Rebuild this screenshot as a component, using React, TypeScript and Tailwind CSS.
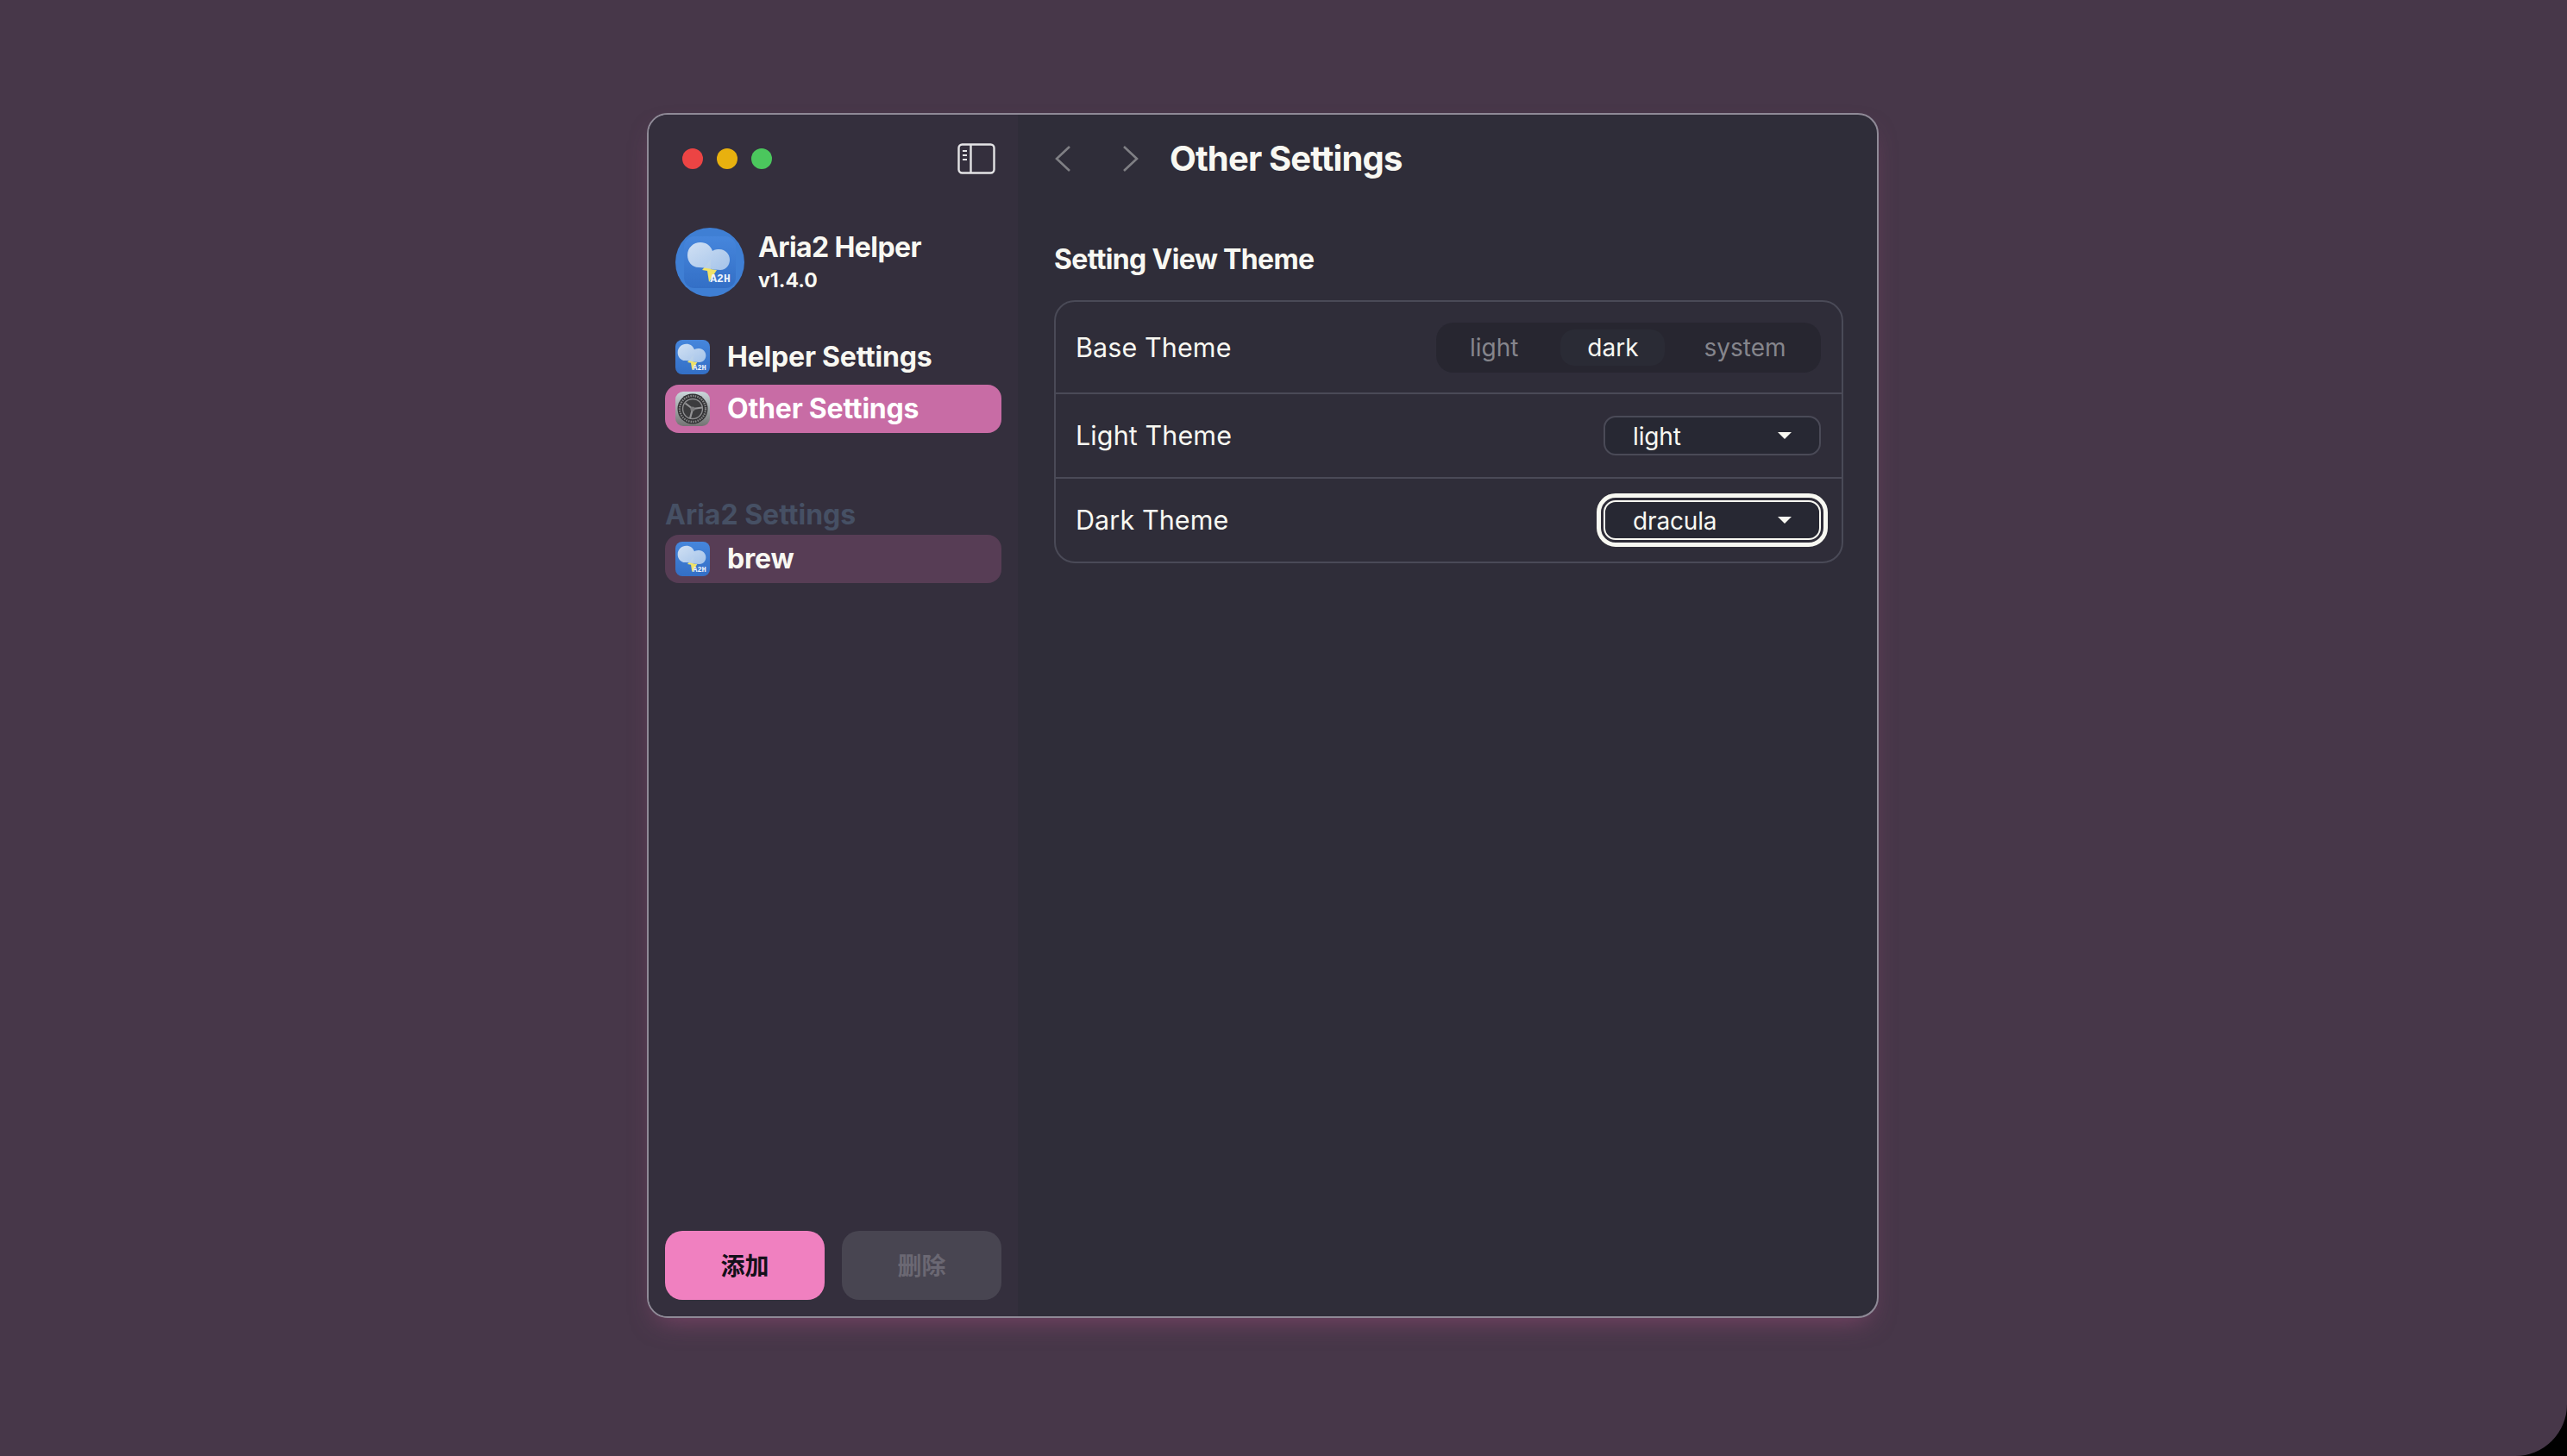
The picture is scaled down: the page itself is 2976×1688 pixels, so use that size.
import React from "react";

const FG = "text-[#f8f8f2]";

function AppGlyph({ id }: { id: string }) {
  // cloud + bolt, shared by the round logo and the nav icons
  return (
    <svg viewBox="0 0 60 60" className="w-full h-full">
      <defs>
        <linearGradient id={`bg-${id}`} x1="0" y1="0" x2="0" y2="1">
          <stop offset="0" stopColor="#4686dc" />
          <stop offset="1" stopColor="#336fc6" />
        </linearGradient>
        <linearGradient id={`cl-${id}`} x1="0" y1="0" x2="1" y2="1">
          <stop offset="0" stopColor="#d6e4f5" />
          <stop offset="1" stopColor="#a8c6ea" />
        </linearGradient>
      </defs>
      <rect width="60" height="60" rx="12" fill={`url(#bg-${id})`} />
      <path d="M31 27 L21 39 L27 40 L29 53 L38 39 L31 38 Z" fill="#f0e268" />
      <path
        d="M17 36 C9 36 4 29 4 22 C4 13 11 7 19 7 C26 7 31 11 33 17 C36 15 39 15 41 15 C48 15 53 21 53 27 C53 33 49 39 42 39 C34 39 25 36 17 36 Z"
        fill={`url(#cl-${id})`}
        fillOpacity="0.96"
      />
      <text x="42" y="53" textAnchor="middle" fontFamily="'Liberation Mono', monospace" fontWeight="700" fontSize="13" fill="#eef4fb">
        A2H
      </text>
    </svg>
  );
}

function GearIcon() {
  return (
    <svg viewBox="0 0 40 40" className="w-10 h-10">
      <defs>
        <linearGradient id="gearBg" x1="0" y1="0" x2="0" y2="1">
          <stop offset="0" stopColor="#cbd6da" />
          <stop offset="1" stopColor="#737373" />
        </linearGradient>
      </defs>
      <rect width="40" height="40" rx="9" fill="url(#gearBg)" />
      <circle cx="20" cy="20" r="17.5" fill="#303032" />
      <circle cx="20" cy="20" r="15" fill="none" stroke="#858587" strokeWidth="2.4" strokeDasharray="1.6 1.1" />
      <circle cx="20" cy="20" r="11.5" fill="#3c3c3e" stroke="#8f8f91" strokeWidth="1.4" />
      <path d="M20 20 L11.5 13.5 M20 20 L31 18.5 M20 20 L17 31" stroke="#949496" strokeWidth="2.2" />
      <circle cx="20" cy="20" r="2.6" fill="#7c7c7e" />
    </svg>
  );
}

function NavItem({ icon, label, className = "" }: { icon: React.ReactNode; label: string; className?: string }) {
  return (
    <div className={`flex items-center h-14 rounded-2xl pl-3 ${className}`}>
      <div className="w-10 h-10 shrink-0">{icon}</div>
      <span className="ml-[20px] text-[32px] font-[650] leading-none tracking-[-0.2px]">{label}</span>
    </div>
  );
}

function Select({ value, focused }: { value: string; focused?: boolean }) {
  return (
    <div
      className={`flex items-center justify-between w-[252px] h-[46px] rounded-[14px] border-2 bg-[#272833] pl-[32px] pr-[32px] ${
        focused ? "border-[#f8f8f2] outline-[5px] outline-offset-[3px] outline-[#f8f8f2]" : "border-[#4a4a57]"
      }`}
    >
      <span className="text-[28px] leading-none tracking-[-0.15px] pt-[1px]">{value}</span>
      <span className="w-0 h-0 border-x-[8px] border-x-transparent border-t-[8px] border-t-[#f8f8f2]" />
    </div>
  );
}

export default function App() {
  return (
    <div className="w-[2976px] h-[1688px] bg-black overflow-hidden" style={{ fontFamily: "Inter, 'Noto Sans CJK SC', sans-serif" }}>
      <div className={`w-full h-full bg-[#473749] rounded-br-[60px] pl-[750px] pt-[131px] ${FG}`}>
        <div className="flex w-[1428px] h-[1397px] rounded-[24px] border-2 border-[#8f8a97] overflow-hidden bg-[#2f2d39] shadow-[0_14px_30px_-12px_rgba(170,80,130,0.55)]">
          {/* Sidebar */}
          <aside className="flex flex-col w-[428px] shrink-0 bg-[#342f3d] px-[19px] pb-[19px]">
            <div className="flex items-center justify-between h-[102px] pl-[20px] pr-[7px] shrink-0">
              <div className="flex gap-4">
                <span className="w-6 h-6 rounded-full bg-[#ec4444]" />
                <span className="w-6 h-6 rounded-full bg-[#e8b10f]" />
                <span className="w-6 h-6 rounded-full bg-[#4bc75d]" />
              </div>
              <svg viewBox="0 0 44 36" className="w-[44px] h-[36px]" fill="none" stroke="#e4e4e6" strokeWidth="2.4">
                <rect x="1.5" y="1.5" width="41" height="33" rx="4" />
                <path d="M15.5 2v32" />
                <path d="M6 9h5M6 14h5M6 19h5" strokeWidth="2" />
              </svg>
            </div>
            <div className="flex items-center mt-[29px] pl-3">
              <div className="w-20 h-20 rounded-full bg-[#3f7fd4] flex items-center justify-center shrink-0">
                <div className="w-[60px] h-[60px]">
                  <AppGlyph id="logo" />
                </div>
              </div>
              <div className="ml-4 flex flex-col">
                <span className="text-[32px] font-[650] leading-[42px] tracking-[-0.6px]">Aria2 Helper</span>
                <span className="text-[23px] font-[650] leading-[34px]">v1.4.0</span>
              </div>
            </div>
            <div className="flex flex-col gap-1 mt-[42px]">
              <NavItem icon={<AppGlyph id="helper" />} label="Helper Settings" />
              <NavItem icon={<GearIcon />} label="Other Settings" className="bg-[#c86ca5] text-white" />
            </div>
            <div className="mt-[74px] mb-[2px] text-[32px] font-[650] leading-[42px] text-[#465064]">Aria2 Settings</div>
            <NavItem icon={<AppGlyph id="brew" />} label="brew" className="bg-[#573d55]" />
            <div className="flex gap-5 mt-auto">
              <button className="flex-1 h-20 rounded-[20px] bg-[#f080c0] text-[28px] font-bold text-[#14101a] pt-[2px]">添加</button>
              <button className="flex-1 h-20 rounded-[20px] bg-[#484551] text-[28px] font-bold text-[#6b6873] pt-[2px]">删除</button>
            </div>
          </aside>

          {/* Content */}
          <main className="flex-1 flex flex-col pl-[42px]">
            <div className="flex items-center h-[102px] shrink-0">
              <svg viewBox="0 0 20 32" className="w-5 h-8" fill="none" stroke="#7f7f84" strokeWidth="2.6">
                <path d="M18 2 L3 16 L18 30" />
              </svg>
              <svg viewBox="0 0 20 32" className="w-5 h-8 ml-[59px]" fill="none" stroke="#7f7f84" strokeWidth="2.6">
                <path d="M2 2 L17 16 L2 30" />
              </svg>
              <h1 className="ml-[35px] text-[40px] font-[650] leading-none tracking-[-0.85px]">Other Settings</h1>
            </div>
            <h2 className="mt-[46px] text-[32px] font-[650] leading-[40px] tracking-[-0.66px]">Setting View Theme</h2>
            <div className="mt-[27px] rounded-[24px] border-2 border-[#4a4a57] w-[915px]">
              <div className="flex items-center justify-between h-[107px] pl-[23px] pr-6 border-b-2 border-[#4a4a57]">
                <span className="text-[30.5px] tracking-[0.1px] leading-none pt-[1px]">Base Theme</span>
                <div className="flex items-center w-[446px] h-[58px] rounded-[20px] bg-[#272630] text-[28px] leading-none">
                  <span className="ml-[39px] text-[#85858c]">light</span>
                  <span className="ml-[49px] flex items-center justify-center w-[121px] h-[42px] rounded-[16px] bg-[#2a2b35]">dark</span>
                  <span className="ml-[45px] text-[#85858c]">system</span>
                </div>
              </div>
              <div className="flex items-center justify-between h-[98px] pl-[23px] pr-6 border-b-2 border-[#4a4a57]">
                <span className="text-[30.5px] tracking-[0.1px] leading-none pt-[1px]">Light Theme</span>
                <Select value="light" />
              </div>
              <div className="flex items-center justify-between h-[96px] pl-[23px] pr-6">
                <span className="text-[30.5px] tracking-[0.1px] leading-none pt-[1px]">Dark Theme</span>
                <Select value="dracula" focused />
              </div>
            </div>
          </main>
        </div>
      </div>
    </div>
  );
}
